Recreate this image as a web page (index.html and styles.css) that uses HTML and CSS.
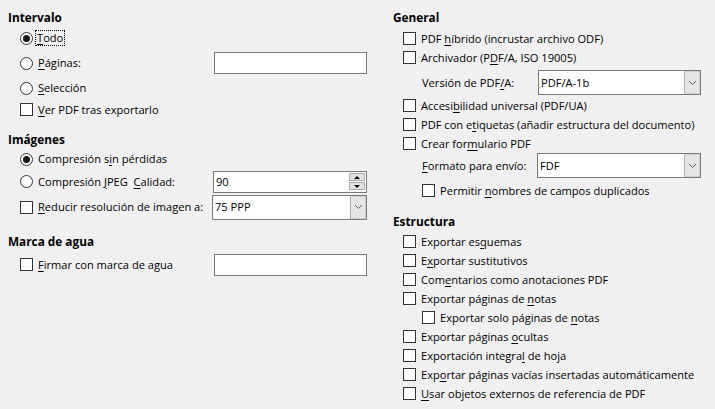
FILE: index.html
```html
<!DOCTYPE html>
<html lang="es">
<head>
<meta charset="utf-8">
<title>Opciones PDF</title>
<link rel="stylesheet" href="styles.css">
</head>
<body>
<div class="dialog">
  <div class="col left">
    <div class="heading">Intervalo</div>
    <div class="row r-todo ind-l"><span class="radio checked"></span><span class="lbl focus"><u>T</u>odo</span></div>
    <div class="row r-pag ind-l"><span class="radio"></span><span class="lbl"><u>P</u>áginas:</span><span class="textbox push"></span></div>
    <div class="row r-sel ind-l"><span class="radio"></span><span class="lbl"><u>S</u>elección</span></div>
    <div class="row r-ver ind-l"><span class="check"></span><span class="lbl"><u>V</u>er PDF tras exportarlo</span></div>

    <div class="heading h-img">Imágenes</div>
    <div class="row r-sin ind-l"><span class="radio checked"></span><span class="lbl">Compresión s<u>i</u>n pérdidas</span></div>
    <div class="row r-jpeg ind-l"><span class="radio"></span><span class="lbl">Compresión <u>J</u>PEG&nbsp;&nbsp;<u>C</u>alidad:</span>
      <span class="spin push"><span class="field-text">90</span><span class="spin-btns"><span class="spin-btn"><span class="tri up"></span></span><span class="spin-btn"><span class="tri down"></span></span></span></span>
    </div>
    <div class="row r-red ind-l"><span class="check"></span><span class="lbl"><u>R</u>educir resolución de imagen a:</span>
      <span class="combo combo-l push"><span class="field-text">75 PPP</span><span class="combo-btn"><svg width="9" height="6" viewBox="0 0 9 6"><polyline points="1,1 4.5,4.5 8,1" fill="none" stroke="#606060" stroke-width="1"/></svg></span></span>
    </div>

    <div class="heading h-marca">Marca de agua</div>
    <div class="row r-firm ind-l"><span class="check"></span><span class="lbl"><u>F</u>irmar con marca de agua</span><span class="textbox push"></span></div>
  </div>

  <div class="col right">
    <div class="heading">General</div>
    <div class="row r19 first ind-r"><span class="check"></span><span class="lbl">PDF <u>h</u>íbrido (incrustar archivo ODF)</span></div>
    <div class="row r19 ind-r"><span class="check"></span><span class="lbl">Archivador (P<u>D</u>F/A, ISO 19005)</span></div>
    <div class="row r-combo c-ver ind-sub"><span class="lbl sub-lbl">Versión de PDF<u>/</u>A:</span>
      <span class="combo combo-r push"><span class="field-text">PDF/A-1b</span><span class="combo-btn"><svg width="9" height="6" viewBox="0 0 9 6"><polyline points="1,1 4.5,4.5 8,1" fill="none" stroke="#606060" stroke-width="1"/></svg></span></span>
    </div>
    <div class="row r19 acc ind-r"><span class="check"></span><span class="lbl">Accesi<u>b</u>ilidad universal (PDF/UA)</span></div>
    <div class="row r19 ind-r"><span class="check"></span><span class="lbl">PDF con e<u>t</u>iquetas (añadir estructura del documento)</span></div>
    <div class="row r19 ind-r"><span class="check"></span><span class="lbl">Crear for<u>m</u>ulario PDF</span></div>
    <div class="row r-combo ind-sub"><span class="lbl sub-lbl"><u>F</u>ormato para envío:</span>
      <span class="combo combo-r2 push"><span class="field-text">FDF</span><span class="combo-btn"><svg width="9" height="6" viewBox="0 0 9 6"><polyline points="1,1 4.5,4.5 8,1" fill="none" stroke="#606060" stroke-width="1"/></svg></span></span>
    </div>
    <div class="row r19 perm ind-sub"><span class="check"></span><span class="lbl">Permitir <u>n</u>ombres de campos duplicados</span></div>

    <div class="heading h-est">Estructura</div>
    <div class="row r19s first-s ind-r"><span class="check"></span><span class="lbl">Exportar es<u>q</u>uemas</span></div>
    <div class="row r19s ind-r"><span class="check"></span><span class="lbl">E<u>x</u>portar sustitutivos</span></div>
    <div class="row r19s ind-r"><span class="check"></span><span class="lbl">Com<u>e</u>ntarios como anotaciones PDF</span></div>
    <div class="row r19s ind-r"><span class="check"></span><span class="lbl">Exportar páginas de <u>n</u>otas</span></div>
    <div class="row r19s ind-sub"><span class="check"></span><span class="lbl">Exportar solo páginas de <u>n</u>otas</span></div>
    <div class="row r19s ind-r"><span class="check"></span><span class="lbl">Exportar páginas <u>o</u>cultas</span></div>
    <div class="row r19s ind-r"><span class="check"></span><span class="lbl">Exportación integra<u>l</u> de hoja</span></div>
    <div class="row r19s ind-r"><span class="check"></span><span class="lbl">Exp<u>o</u>rtar páginas vacías insertadas automáticamente</span></div>
    <div class="row r19s ind-r"><span class="check"></span><span class="lbl"><u>U</u>sar objetos externos de referencia de PDF</span></div>
  </div>
</div>
</body>
</html>
```

FILE: styles.css
```css
html, body {
  margin: 0;
  padding: 0;
  background: #f0f0f0;
}
body {
  font-family: "Open Sans", "Noto Sans", sans-serif;
  font-size: 11.1px;
  color: #000;
}
.dialog {
  display: flex;
  width: 715px;
  height: 409px;
  overflow: hidden;
}
.col {
  box-sizing: border-box;
  display: flex;
  flex-direction: column;
  padding-top: 8px;
}
.left {
  width: 367px;
  padding-left: 8px;
}
.right {
  margin-left: 26px;
  width: 308px;
}
.heading {
  height: 18px;
  line-height: 18px;
  font-weight: bold;
  font-size: 11.8px;
}
.row {
  display: flex;
  align-items: center;
  box-sizing: border-box;
  white-space: nowrap;
}
.ind-l { padding-left: 12px; }
.ind-r { padding-left: 10px; }
.ind-sub { padding-left: 29px; }
.push { margin-left: auto; }

.lbl {
  margin-left: 5px;
  line-height: 14px;
}
.sub-lbl { margin-left: 0; }
u {
  text-decoration: underline;
  text-underline-offset: 2px;
  text-decoration-thickness: 1px;
}
.focus {
  outline: 1px dotted #000;
  outline-offset: 0;
  padding: 0 1px;
  margin-left: 3px;
}

/* left rows */
.r-todo { height: 24px; }
.r-pag { height: 26px; }
.r-sel { height: 24px; }
.r-ver { height: 19px; }
.h-img { margin-top: 11px; }
.r-sin { height: 22px; }
.r-jpeg { height: 23px; }
.r-red { height: 26px; margin-top: 1px; }
.h-marca { margin-top: 12px; }
.r-firm { height: 23px; margin-top: 3px; }

/* right rows */
.r19 { height: 19px; }
.first { margin-top: 3px; }
.r-combo { height: 25px; }
.c-ver { margin-top: 3px; }
.acc { margin-top: 1px; }
.perm { margin-top: 3px; }
.h-est { margin-top: 12px; }
.r19s { height: 19px; }
.first-s { margin-top: 2px; }

/* controls */
.radio {
  width: 13px;
  height: 13px;
  box-sizing: border-box;
  border: 1px solid #333;
  border-radius: 50%;
  background: #fff;
  display: flex;
  align-items: center;
  justify-content: center;
  flex: none;
}
.radio.checked::after {
  content: "";
  width: 7px;
  height: 7px;
  border-radius: 50%;
  background: #1a1a1a;
}
.check {
  width: 13px;
  height: 13px;
  box-sizing: border-box;
  border: 1px solid #333;
  background: #fff;
  flex: none;
}
.textbox {
  width: 153px;
  height: 22px;
  box-sizing: border-box;
  border: 1px solid #7a7a7a;
  background: #fff;
}
.field-text {
  flex: 1;
  padding-left: 2px;
  line-height: 14px;
}
.spin {
  display: flex;
  align-items: center;
  width: 154px;
  height: 22px;
  box-sizing: border-box;
  border: 1px solid #7a7a7a;
  background: #fff;
}
.spin-btns {
  display: flex;
  flex-direction: column;
  gap: 1px;
  margin-right: 1px;
}
.spin-btn {
  width: 16px;
  height: 8px;
  box-sizing: border-box;
  background: #e1e1e1;
  border: 1px solid #adadad;
  display: flex;
  align-items: center;
  justify-content: center;
}
.tri {
  width: 0;
  height: 0;
  border-left: 3px solid transparent;
  border-right: 3px solid transparent;
}
.tri.up { border-bottom: 3px solid #000; }
.tri.down { border-top: 3px solid #000; }

.combo {
  display: flex;
  align-items: stretch;
  height: 25px;
  box-sizing: border-box;
  border: 1px solid #7a7a7a;
  background: #fff;
}
.combo .field-text {
  display: flex;
  align-items: center;
}
.combo-l { width: 155px; }
.combo-r { width: 163px; }
.combo-r2 { width: 164px; }
.combo-btn {
  width: 16px;
  box-sizing: border-box;
  background: #e5e5e5;
  border: 1px solid #cfcfcf;
  border-left-color: #adadad;
  display: flex;
  align-items: center;
  justify-content: center;
}
```
